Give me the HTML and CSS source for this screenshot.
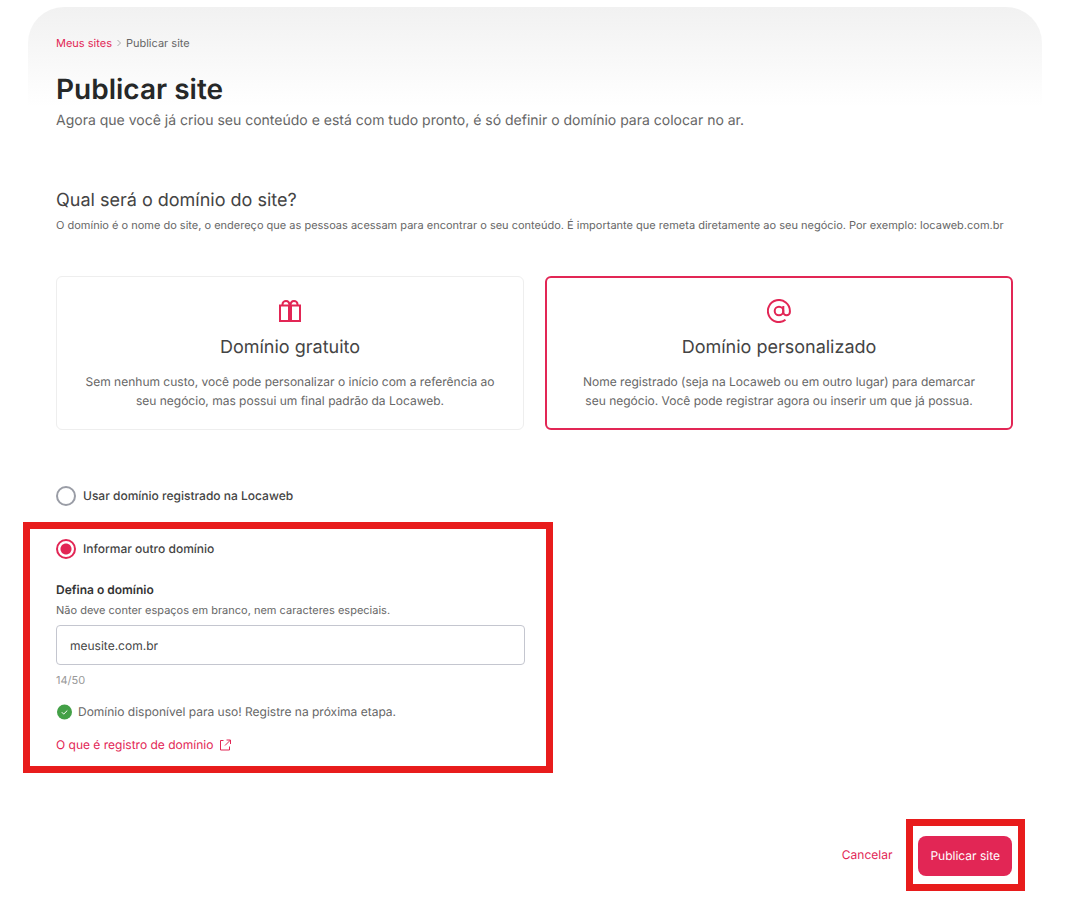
FILE: index.html
```html
<!DOCTYPE html>
<html lang="pt-BR">
<head>
    <meta charset="UTF-8">
    <meta name="viewport" content="width=device-width, initial-scale=1">
    <title>Publicar site</title>
    <link rel="stylesheet" href="styles.css">
</head>
<body>
    <main class="page">
        <nav class="breadcrumb" aria-label="Navegação">
            <a href="#">Meus sites</a>
            <svg class="chevron" viewBox="0 0 6 8" aria-hidden="true"><path d="M1.500 1l3 3-3 3"/></svg>
            <span>Publicar site</span>
        </nav>
        <h1>Publicar site</h1>
        <p class="lead">Agora que você já criou seu conteúdo e está com tudo pronto, é só definir o domínio para colocar no ar.</p>

        <h2 class="question">Qual será o domínio do site?</h2>
        <p class="small">O domínio é o nome do site, o endereço que as pessoas acessam para encontrar o seu conteúdo. É importante que remeta diretamente ao seu negócio. Por exemplo: locaweb.com.br</p>

        <form>
            <div class="cards">
                <button type="button" class="card" aria-pressed="false">
                    <svg class="card-icon" viewBox="0 0 24 24" aria-hidden="true">
                        <path d="M2 6.500h20v15.500H2zM11 6.500v15M13 6.500v15"/>
                        <path d="M11.500 6.500C11.500 3.500 10 2 8 2S4.500 3.500 4.500 5.200V6.500M12.500 6.500C12.500 3.500 14 2 16 2s3.500 1.500 3.500 3.200V6.500"/>
                    </svg>
                    <span class="card-title">Domínio gratuito</span>
                    <span class="card-text">Sem nenhum custo, você pode personalizar o início com a referência ao seu negócio, mas possui um final padrão da Locaweb.</span>
                </button>
                <button type="button" class="card selected" aria-pressed="true">
                    <svg class="card-icon" viewBox="0 0 24 24" aria-hidden="true">
                        <circle cx="12" cy="12" r="4.300"/>
                        <path d="M16.300 7V13a3.300 3.300 0 0 0 6.600 0V12A11 11 0 1 0 18.500 20.800"/>
                    </svg>
                    <span class="card-title">Domínio personalizado</span>
                    <span class="card-text">Nome registrado (seja na Locaweb ou em outro lugar) para demarcar seu negócio. Você pode registrar agora ou inserir um que já possua.</span>
                </button>
            </div>

            <div class="options">
                <label class="radio"><input type="radio" name="origem"> Usar domínio registrado na Locaweb</label>
                <div class="highlight highlight-form">
                    <label class="radio"><input type="radio" name="origem" checked> Informar outro domínio</label>
                    <label class="field-label" for="dominio">Defina o domínio</label>
                    <p class="hint" id="dica">Não deve conter espaços em branco, nem caracteres especiais.</p>
                    <input class="field" type="text" id="dominio" maxlength="50" value="meusite.com.br" aria-describedby="dica">
                    <p class="counter">14/50</p>
                    <p class="status">
                        <svg class="check" viewBox="0 0 16 16" aria-hidden="true"><circle cx="8.500" cy="8" r="7.500"/><path d="M5.800 8.200l1.900 1.900 3.600-3.600"/></svg>
                        Domínio disponível para uso! Registre na próxima etapa.
                    </p>
                    <a class="help" href="#">
                        O que é registro de domínio
                        <svg class="external" viewBox="0 0 12 12" aria-hidden="true"><path d="M4.500 1.500H1.500V11h9V7.500M7.500 1h4v4M11.500 1L6 6.500"/></svg>
                    </a>
                </div>
            </div>

            <div class="actions">
                <a class="cancel" href="#">Cancelar</a>
                <div class="highlight highlight-button">
                    <button type="submit" class="publish">Publicar site</button>
                </div>
            </div>
        </form>
    </main>
</body>
</html>
```

FILE: styles.css
```css
* {
    box-sizing: border-box;
}
body {
    margin: 0;
    font-family: Inter, "Liberation Sans", sans-serif;
    font-size: 12px;
    line-height: 18px;
    font-optical-sizing: none;
    text-rendering: geometricPrecision;
    color: #666;
    background-color: #fff;
}
h1, h2, p {
    margin: 0;
}
a {
    color: #e22655;
    text-decoration: none;
}
button, input {
    font: inherit;
    font-optical-sizing: inherit;
    text-rendering: inherit;
}
svg {
    fill: none;
    stroke: #e22655;
    flex: none;
}
.page {
    margin: 7px 28px 0;
    padding: 28px 29px 0 28px;
    border-radius: 36px 36px 0 0;
    background: linear-gradient(#f1f1f1, #fff 100px);
}
.breadcrumb {
    display: flex;
    align-items: center;
    gap: 4px;
    font-size: 11px;
    line-height: 16px;
}
.chevron {
    width: 6px;
    height: 8px;
    stroke: #aaa;
}
h1 {
    margin-top: 20px;
    font-size: 28px;
    line-height: 36px;
    font-weight: 600;
    color: #262828;
}
.lead {
    margin-top: 4px;
    font-size: 14px;
    line-height: 20px;
}
.question {
    margin-top: 58px;
    font-size: 18px;
    line-height: 24px;
    font-weight: 400;
    color: #444;
}
.small {
    margin-top: 4px;
    font-size: 11px;
    line-height: 16px;
}
.cards {
    display: grid;
    grid-template-columns: 1fr 1fr;
    gap: 21px;
    margin-top: 43px;
}
.card {
    display: flex;
    flex-direction: column;
    align-items: center;
    padding: 22px 26px 19px;
    border: 1px solid #eee;
    border-radius: 6px;
    background: #fff;
    color: #666;
    cursor: pointer;
}
.card.selected {
    padding: 21px 25px 18px;
    border: 2px solid #e22655;
}
.card-icon {
    width: 24px;
    height: 24px;
    stroke-width: 2;
}
.card-title {
    margin-top: 13px;
    font-size: 18px;
    line-height: 24px;
    color: #444;
}
.card-text {
    margin-top: 12px;
    line-height: 19px;
}
.options {
    margin-top: 56px;
}
.radio {
    display: flex;
    align-items: center;
    gap: 7px;
    line-height: 20px;
    font-weight: 500;
    color: #444;
}
.radio input {
    appearance: none;
    width: 20px;
    height: 20px;
    margin: 0;
    border: 2px solid #9a9da6;
    border-radius: 50%;
}
.radio input:checked {
    border-color: #e22655;
    background: radial-gradient(circle, #e22655 5px, #fff 6px);
}
.highlight {
    border: 7px solid #e81c1c;
}
.highlight-form {
    width: calc(50% + 51px);
    margin: 16px 0 0 -33px;
    padding: 10px 21px 12px 26px;
}
.field-label {
    display: block;
    margin-top: 22px;
    font-weight: 600;
    color: #333;
}
.hint {
    margin-top: 3px;
    font-size: 11px;
    line-height: 16px;
}
.field {
    display: block;
    width: 100%;
    height: 40px;
    margin-top: 7px;
    padding: 0 13px;
    border: 1px solid #c4c6cf;
    border-radius: 4px;
    color: #444;
}
.counter {
    margin-top: 7px;
    font-size: 11px;
    line-height: 16px;
    color: #999;
}
.status {
    display: flex;
    align-items: center;
    gap: 6px;
    margin-top: 15px;
}
.check {
    width: 16px;
    height: 16px;
    fill: #43a047;
    stroke: none;
}
.check path {
    fill: none;
    stroke: #fff;
}
.help {
    display: flex;
    align-items: center;
    gap: 6px;
    margin-top: 15px;
}
.external {
    width: 12px;
    height: 12px;
}
.actions {
    display: flex;
    align-items: center;
    justify-content: flex-end;
    gap: 14px;
    margin: 46px -12px 16px 0;
}
.highlight-button {
    padding: 10px 6px 8px 5px;
}
.publish {
    display: block;
    height: 40px;
    padding: 0 12px;
    border: 0;
    border-radius: 8px;
    background-color: #e22655;
    color: #fff;
    cursor: pointer;
}
```
